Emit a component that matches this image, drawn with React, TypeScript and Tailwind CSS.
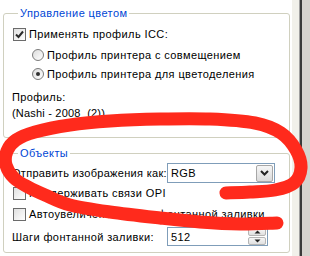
import React from "react";

const font = { fontFamily: '"Liberation Sans", Arial, sans-serif' };

// the red marker scribble, center line of the brush
const stroke: [number, number][] = [
  [277, 223], [240, 224], [200, 222], [160, 218], [110, 212], [70, 205],
  [45, 195], [28, 187], [14, 178], [6, 165], [7, 151], [16, 140],
  [35, 132], [70, 125], [110, 121], [160, 119], [210, 119], [255, 123],
  [281, 133], [296, 150], [301, 168], [294, 183], [275, 190], [250, 192],
  [226, 193],
];

function smooth(pts: [number, number][]) {
  let d = `M${pts[0][0]},${pts[0][1]}`;
  for (let i = 0; i < pts.length - 1; i++) {
    const p0 = pts[i - 1] || pts[i];
    const p1 = pts[i];
    const p2 = pts[i + 1];
    const p3 = pts[i + 2] || p2;
    const c1x = p1[0] + (p2[0] - p0[0]) / 6;
    const c1y = p1[1] + (p2[1] - p0[1]) / 6;
    const c2x = p2[0] - (p3[0] - p1[0]) / 6;
    const c2y = p2[1] - (p3[1] - p1[1]) / 6;
    d += ` C${c1x},${c1y} ${c2x},${c2y} ${p2[0]},${p2[1]}`;
  }
  return d;
}

function Check({ checked }: { checked?: boolean }) {
  return (
    <span className="flex h-[13px] w-[13px] shrink-0 items-center justify-center border border-[#6b6b6b] bg-gradient-to-br from-[#e0e0e0] to-white">
      {checked && (
        <svg width="9" height="9" viewBox="0 0 9 9">
          <path d="M1 4.5 L3.5 7 L8 1.5" fill="none" stroke="#2b2b2b" strokeWidth="2" />
        </svg>
      )}
    </span>
  );
}

function Radio({ checked }: { checked?: boolean }) {
  return (
    <span className="flex h-[12px] w-[12px] shrink-0 items-center justify-center rounded-full border border-[#7b7b7b] bg-gradient-to-br from-[#dcdcdc] to-white">
      {checked && <span className="h-[4px] w-[4px] rounded-full bg-[#303030]" />}
    </span>
  );
}

export default function App() {
  return (
    <div className="relative flex h-[256px] w-[310px] overflow-hidden bg-white text-[11px] leading-[14px] tracking-[0.4px] text-black" style={font}>
      <div className="w-[292px] pl-[3px] pr-[2px]">
        <fieldset className="mt-[6px] h-[132px] rounded-[3px] border border-[#d0d0bf] pl-[8px]">
          <legend className="ml-[6px] px-[2px] text-[#0046d5]">Управление цветом</legend>
          <div className="mt-[7px] flex items-center gap-[3px] pl-px">
            <Check checked />
            <span>Применять профиль ICC:</span>
          </div>
          <div className="mt-[7px] flex flex-col gap-[5px] pl-[20px]">
            <div className="flex items-center gap-[3px]">
              <Radio />
              <span>Профиль принтера с совмещением</span>
            </div>
            <div className="flex items-center gap-[3px]">
              <Radio checked />
              <span>Профиль принтера для цветоделения</span>
            </div>
          </div>
          <div className="mt-[9px]">Профиль:</div>
          <div className="mt-[2px] tracking-[0.2px]">(Nashi - 2008&nbsp;&nbsp;(2))</div>
        </fieldset>

        <fieldset className="mt-[8px] h-[107px] rounded-[3px] border border-[#d0d0bf] pl-[8px]">
          <legend className="ml-[6px] px-[2px] text-[#0046d5]">Объекты</legend>
          <div className="mt-[3px] grid grid-cols-[155px_1fr] items-center">
            <span className="whitespace-nowrap tracking-[0.3px]">Отправить изображения как:</span>
            <div className="flex h-[20px] w-[108px] items-center border border-[#7f9db9] bg-white pl-[3px]">
              <span className="flex-1">RGB</span>
              <span className="mr-px flex h-[17px] w-[17px] items-center justify-center rounded-[2px] border border-[#a7a7a7] bg-gradient-to-b from-[#f6f6f6] to-[#dadada]">
                <svg width="9" height="6" viewBox="0 0 9 6">
                  <path d="M1 1 L4.5 4.5 L8 1" fill="none" stroke="#222" strokeWidth="2" />
                </svg>
              </span>
            </div>
          </div>
          <div className="mt-[3px] flex items-center gap-[3px] pl-px">
            <Check />
            <span>Поддерживать связи OPI</span>
          </div>
          <div className="mt-[7px] flex items-center gap-[3px] pl-px">
            <Check />
            <span className="whitespace-nowrap">Автоувеличение шагов фонтанной заливки</span>
          </div>
          <div className="mt-[6px] grid grid-cols-[155px_1fr] items-center">
            <span className="whitespace-nowrap">Шаги фонтанной заливки:</span>
            <div className="flex h-[19px] w-[101px] items-center border border-[#7f9db9] bg-white pl-[3px]">
              <span className="flex-1">512</span>
              <span className="mr-px flex w-[18px] flex-col gap-px">
                <span className="flex h-[8px] items-center justify-center rounded-[2px] border border-[#b5b5b5] bg-gradient-to-b from-[#f6f6f6] to-[#e0e0e0]">
                  <svg width="7" height="4" viewBox="0 0 7 4">
                    <path d="M0.5 3.5 L3.5 0.5 L6.5 3.5Z" fill="#222" />
                  </svg>
                </span>
                <span className="flex h-[8px] items-center justify-center rounded-[2px] border border-[#b5b5b5] bg-gradient-to-b from-[#f6f6f6] to-[#e0e0e0]">
                  <svg width="7" height="4" viewBox="0 0 7 4">
                    <path d="M0.5 0.5 L3.5 3.5 L6.5 0.5Z" fill="#222" />
                  </svg>
                </span>
              </span>
            </div>
          </div>
        </fieldset>
      </div>

      <div className="flex flex-1">
        <div className="w-[7px] bg-[#f1f0ea]" />
        <div className="w-px bg-[#a0a0a0]" />
        <div className="w-[2px] bg-[#3a3a3a]" />
        <div className="flex-1 bg-[#d6d3ce]" />
      </div>

      <svg className="pointer-events-none absolute inset-0" width="310" height="256" viewBox="0 0 310 256">
        <path d={smooth(stroke)} fill="none" stroke="#ff2a1c" strokeWidth="13" strokeLinecap="round" strokeLinejoin="round" />
      </svg>
    </div>
  );
}
